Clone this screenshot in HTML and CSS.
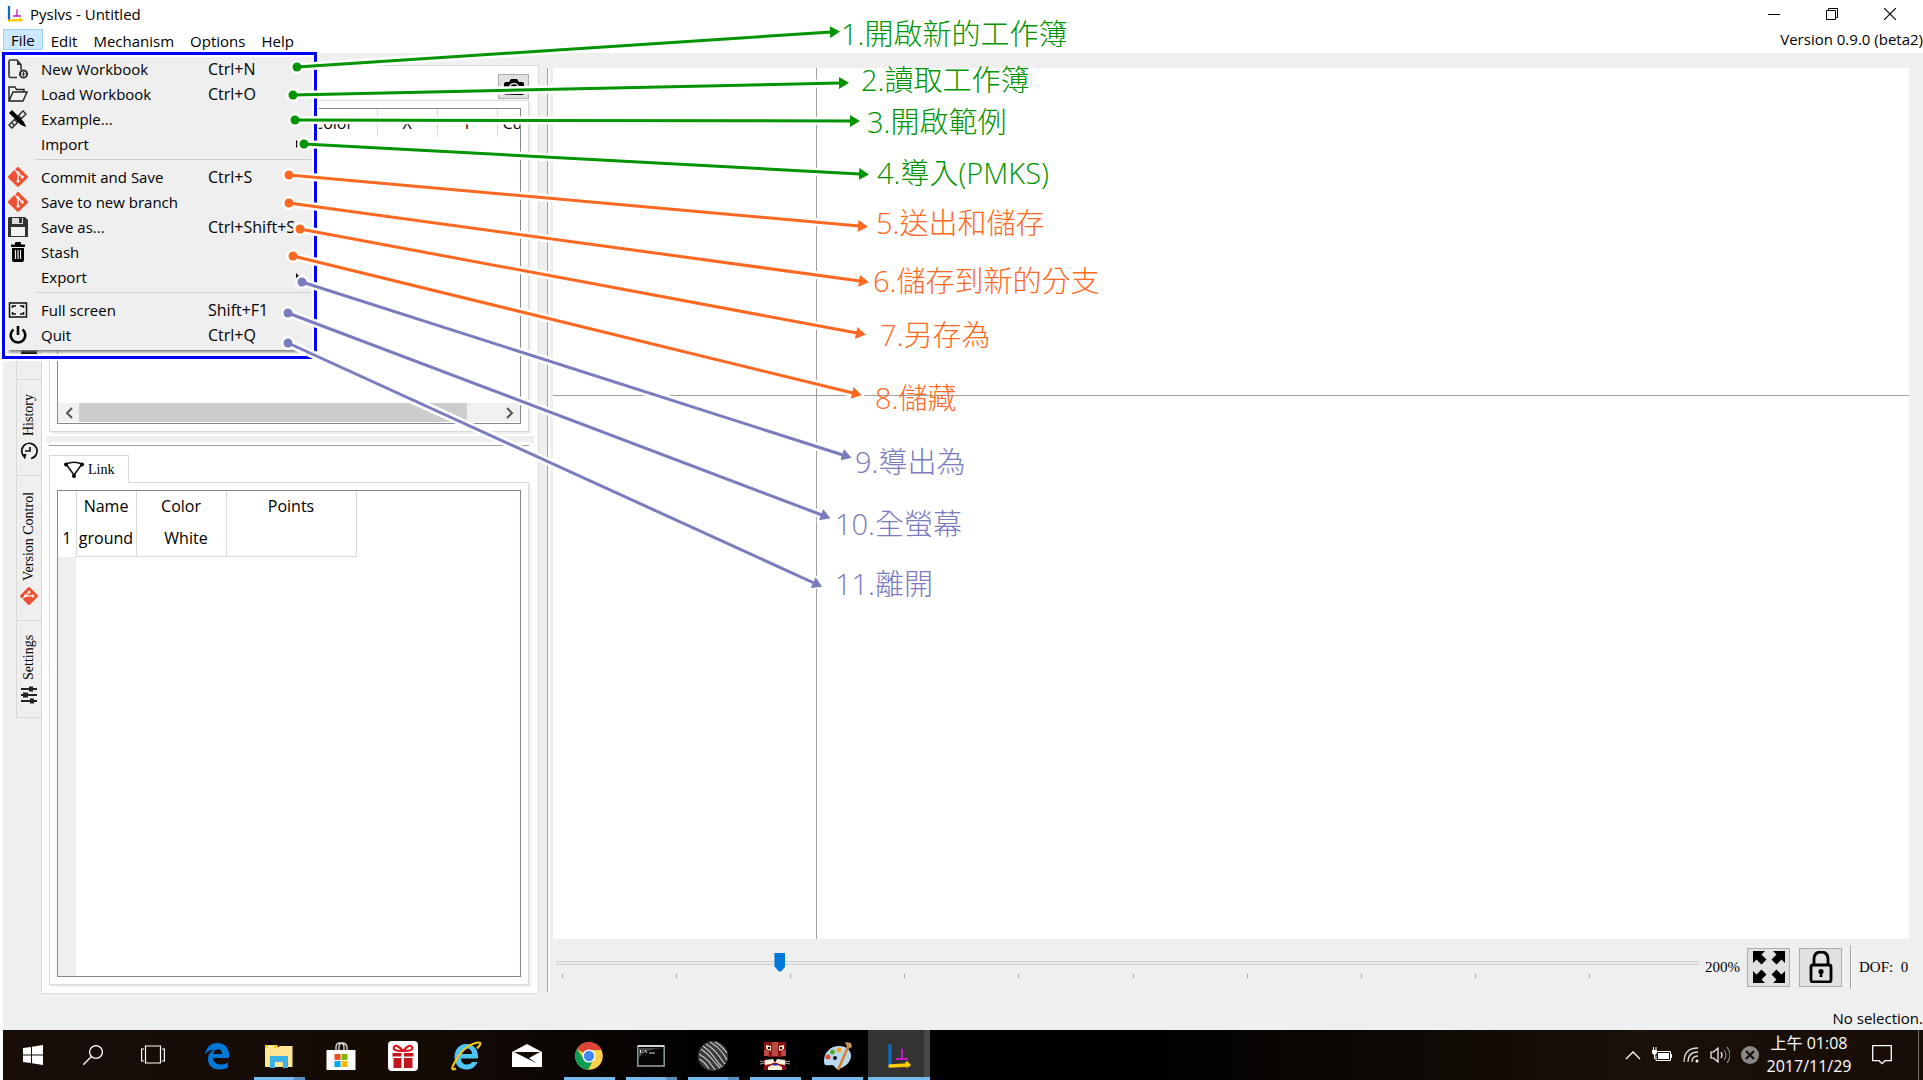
FILE: index.html
```html
<!DOCTYPE html>
<html lang="zh-Hant">
<head>
<meta charset="utf-8">
<title>Pyslvs - Untitled</title>
<link rel="stylesheet" href="styles.css">
</head>
<body>
<svg class="defs" width="0" height="0" aria-hidden="true">
  <symbol id="i-git" viewBox="0 0 24 24"><path fill="#fff" d="M12 3l9 9-9 9-9-9z"/><path fill="#f05033" d="M23.546 10.93L13.067.452c-.604-.603-1.582-.603-2.188 0L8.708 2.627l2.76 2.76c.645-.215 1.379-.07 1.889.441.516.515.658 1.258.438 1.9l2.658 2.66c.645-.223 1.387-.078 1.9.435.721.72.721 1.884 0 2.604-.719.719-1.881.719-2.6 0-.539-.541-.674-1.337-.404-1.996L12.86 8.955v6.525c.176.086.342.203.488.348.713.721.713 1.883 0 2.6-.719.721-1.889.721-2.609 0-.719-.719-.719-1.879 0-2.598.182-.18.387-.316.605-.406V8.835c-.217-.091-.424-.222-.6-.401-.545-.545-.676-1.342-.396-2.009L7.636 3.7.45 10.881c-.6.605-.6 1.584 0 2.189l10.48 10.477c.604.604 1.582.604 2.186 0l10.43-10.43c.605-.603.605-1.582 0-2.187"/></symbol>
  <symbol id="i-app" viewBox="0 0 24 24"><path d="M3 1v20" stroke="#0a6cbc" stroke-width="3.4" stroke-linecap="round"/><path d="M3 22l19-1M20 19v3" stroke="#fc0" stroke-width="3.4" stroke-linecap="round"/><path d="M15 5v10M9 15h12" stroke="#c41ac4" stroke-width="2"/></symbol>
</svg>
<div class="app">
  <header class="titlebar">
    <svg class="app-icon"><use href="#i-app"/></svg>
    <h1>Pyslvs - Untitled</h1>
    <div class="window-buttons">
      <button aria-label="Minimize"><svg width="12" height="12"><path d="M0 6.500h12" stroke="#000"/></svg></button>
      <button aria-label="Restore"><svg width="12" height="12" fill="none" stroke="#000"><path d="M.5 2.500h9v9h-9zM2.500 2V.5h9v9H10"/></svg></button>
      <button aria-label="Close"><svg width="12" height="12" stroke="#000" stroke-width="1.200"><path d="M0 0l12 12M12 0L0 12"/></svg></button>
    </div>
  </header>

  <nav class="menubar">
    <div class="menu-root">
      <button class="menu-title open">File</button>
      <div class="menu">
        <button class="item"><svg viewBox="0 0 20 20"><g fill="none" stroke="#333" stroke-width="1.600"><path d="M9 18.500H2.500a1.500 1.500 0 0 1-1.500-1.500V2.500A1.500 1.500 0 0 1 2.500 1H9l4 4.500V11"/><circle cx="15.500" cy="15" r="3.600" stroke-width="2"/></g><path d="M9 1v5h4z" fill="#333"/><path d="M15.500 13v4M13.500 15h4" stroke="#333"/></svg><span>New Workbook</span><kbd>Ctrl+N</kbd></button>
        <button class="item"><svg viewBox="0 0 20 20" fill="none" stroke="#222" stroke-width="1.400"><path d="M1 17V3h6l1.500 2.500H16V8M1 17L5 8h14l-4 9z"/></svg><span>Load Workbook</span><kbd>Ctrl+O</kbd></button>
        <button class="item"><svg viewBox="0 0 20 20"><path d="M1 16L15 2l3 3L4 19zM4 14l2 2M7 11l2 2M11 7l2 2" fill="none" stroke="#222" stroke-width="1.300"/><path d="M1 4l3-3 12 12 2 5-5-2z" fill="#000"/></svg><span>Example...</span><kbd></kbd></button>
        <button class="item"><i></i><span>Import</span><kbd></kbd><svg class="sub" viewBox="0 0 4 8"><path d="M0 0l4 4-4 4z"/></svg></button>
        <hr>
        <button class="item"><svg><use href="#i-git"/></svg><span>Commit and Save</span><kbd>Ctrl+S</kbd></button>
        <button class="item"><svg><use href="#i-git"/></svg><span>Save to new branch</span><kbd></kbd></button>
        <button class="item"><svg viewBox="0 0 20 20"><path d="M1 0h16l3 3v17H0V1z" fill="#333"/><path d="M4 1h11v6H4z" fill="#ddd"/><path d="M11 1h3v5h-3z" fill="#333"/><path d="M3 10h14v9H3z" fill="#f2f2f2"/></svg><span>Save as...</span><kbd>Ctrl+Shift+S</kbd></button>
        <button class="item"><svg viewBox="0 0 20 20"><path d="M3 2.500h4V1q0-1 1-1h4q1 0 1 1v1.500h4V5H3zM4 6h12v12q0 2-2 2H6q-2 0-2-2z"/><path d="M7.500 8v9M10 8v9M12.500 8v9" stroke="#efefef" stroke-width="1.200"/></svg><span>Stash</span><kbd></kbd></button>
        <button class="item"><i></i><span>Export</span><kbd></kbd><svg class="sub" viewBox="0 0 4 8"><path d="M0 0l4 4-4 4z"/></svg></button>
        <hr>
        <button class="item"><svg viewBox="0 0 20 20" fill="none" stroke="#111" stroke-width="1.500"><path d="M1.500 3h17v14h-17zM4.500 8V6H8M12 6h3.500v2M15.500 12v2H12M8 14H4.500v-2"/></svg><span>Full screen</span><kbd>Shift+F1</kbd></button>
        <button class="item"><svg viewBox="0 0 20 20" fill="none" stroke="#000" stroke-width="2.600"><path d="M10 1v9M5.500 4.500a7.300 7.300 0 1 0 9 0"/></svg><span>Quit</span><kbd>Ctrl+Q</kbd></button>
      </div>
    </div>
    <button class="menu-title">Edit</button>
    <button class="menu-title">Mechanism</button>
    <button class="menu-title">Options</button>
    <button class="menu-title">Help</button>
    <p class="version">Version 0.9.0 (beta2)</p>
  </nav>

  <main class="workspace">
    <div class="side-tabs">
      <button class="side-tab first" aria-label="Mechanism"><svg viewBox="0 0 16 16"><path d="M1 1h4v14H1zM7 6h3v9H7zM12 1h3v6h-3zM12 9h3v6h-3z"/></svg></button>
      <button class="side-tab history"><svg viewBox="0 0 18 18" fill="none" stroke="#111" stroke-width="1.700"><path d="M3.500 4A7.700 7.700 0 1 1 1.500 11"/><path d="M9 5v5h4"/><path d="M6 1.500v5L.5 5z" fill="#111" stroke="none"/></svg><span>History</span></button>
      <button class="side-tab vcs"><svg><use href="#i-git"/></svg><span>Version Control</span></button>
      <button class="side-tab settings"><svg viewBox="0 0 18 18" stroke="#222"><path d="M3 1v16M9 1v16M15 1v16" stroke-width="2"/><path d="M3 10v4M9 3v5M15 9v4" stroke-width="5"/></svg><span>Settings</span></button>
    </div>

    <section class="dock">
      <div class="points">
        <div class="tools"><button class="camera" aria-label="Screenshot"><svg viewBox="0 0 20 16"><path d="M2 3h3l2-3h6l2 3h3q2 0 2 2v9q0 2-2 2H2q-2 0-2-2V5q0-2 2-2z"/><circle cx="10" cy="9" r="4.500" fill="none" stroke="#e1e1e1" stroke-width="1.500"/></svg></button></div>
        <div class="box">
          <div class="view">
            <table class="grid point-grid">
              <tr><th></th><th>Color</th><th>X</th><th>Y</th><th class="cut">Cu</th></tr>
            </table>
            <div class="scrollbar"><button aria-label="Left"><svg width="8" height="12"><path d="M7 1L2 6l5 5" fill="none" stroke="#555" stroke-width="2"/></svg></button><span class="thumb"></span><button aria-label="Right"><svg width="8" height="12"><path d="M1 1l5 5-5 5" fill="none" stroke="#555" stroke-width="2"/></svg></button></div>
          </div>
        </div>
      </div>
      <div class="splitter"></div>
      <div class="links">
        <button class="tab"><svg viewBox="0 0 20 17"><path d="M2 3q8-3.500 16 0l-8 11z" fill="none" stroke="#111" stroke-width="1.600"/><circle cx="2" cy="3.500" r="2"/><circle cx="18" cy="3.500" r="2"/><circle cx="10" cy="15" r="2"/></svg>Link</button>
        <div class="box">
          <div class="view">
            <table class="grid link-grid">
              <tr class="head"><th></th><th>Name</th><th>Color</th><th>Points</th></tr>
              <tr><th>1</th><td>ground</td><td class="swatch">White</td><td></td></tr>
            </table>
            <div class="gutter"></div>
          </div>
        </div>
      </div>
    </section>

    <div class="divider"></div>

    <section class="stage">
      <div class="canvas"></div>
      <div class="controls">
        <div class="zoom">
          <input type="range" min="0" max="1000" value="193" aria-label="Zoom">
          <div class="ticks"><i></i><i></i><i></i><i></i><i></i><i></i><i></i><i></i><i></i><i></i></div>
        </div>
        <span class="percent">200%</span>
        <button class="tool" aria-label="Fit"><svg viewBox="0 0 32 32"><path d="M0 0h12L8.500 3.500l5 5-5 5-5-5L0 12zM32 0v12l-3.500-3.500-5 5-5-5 5-5L20 0zM0 32V20l3.500 3.500 5-5 5 5-5 5L12 32zM32 32H20l3.500-3.500-5-5 5-5 5 5L32 20z"/></svg></button>
        <button class="tool" aria-label="Lock"><svg viewBox="0 0 32 32"><g fill="none" stroke="#000" stroke-width="2.800"><rect x="6" y="14" width="20" height="17" rx="2"/><path d="M9 14V8q0-7 7-7t7 7v6"/></g><circle cx="16" cy="20.500" r="2.600"/><path d="M15 21h2l.5 5h-3z"/></svg></button>
        <span class="rule"></span>
        <span class="dof">DOF:&nbsp; 0</span>
      </div>
    </section>
  </main>
  <p class="status">No selection.</p>

  <footer class="taskbar">
    <div class="system">
      <button aria-label="Start"><svg width="20" height="20" fill="#fff"><path d="M0 3l8-1v7.500H0zM9 1.800L20 0v9.500H9zM0 10.500h8V18l-8-1zM9 10.500h11V20L9 18.300z"/></svg></button>
      <button aria-label="Search"><svg width="20" height="20" fill="none" stroke="#fff" stroke-width="1.300"><circle cx="13" cy="7" r="6.400"/><path d="M8.500 11.500L0 20"/></svg></button>
      <button aria-label="Task view"><svg width="24" height="20" fill="none" stroke="#fff" stroke-width="1.200"><path d="M4.500 1h15v17h-15zM3 4H.6v12H3M21 4h2.400v12H21"/></svg></button>
    </div>
    <div class="apps">
      <button aria-label="Edge"><svg viewBox="0 0 28 28"><path fill="#0078d7" d="M2 13C3 5 8 1 14.500 1 22 1 26 6.500 26 13v3H10c0 4 3.500 6.500 8 6.500 3 0 5-.8 7-2v5c-2 1.300-5 2-8.500 2C9 27.500 5 23 5 17c0-4 2-7 5.500-9C6 8 3.500 10 2 13zm8.200-1H19c0-3-1.400-4.800-4-4.800S10.700 9 10.200 12z"/></svg></button>
      <button class="run stack" aria-label="Explorer"><svg viewBox="0 0 28 28"><path fill="#ffc928" d="M0 3h12l2 3H0z"/><path fill="#fff" d="M3 4h6v1.500H3z"/><path fill="#ffe694" d="M0 6h13l1.500-2H27.500v21H0z"/><path fill="#3bb1e6" d="M5 14h18v12h-5v-6h-8v6H5z"/></svg></button>
      <button aria-label="Store"><svg viewBox="0 0 28 28"><path d="M9 8V5q0-4 4-4t4 4v3M12 8V5q0-4 3.500-4T20 5v3" fill="none" stroke="#ddd" stroke-width="1.300"/><path fill="#fff" d="M-.5 8h29v20h-29z"/><path fill="#f25022" d="M7.500 12h6v6h-6z"/><path fill="#7fba00" d="M14.500 12h6v6h-6z"/><path fill="#00a4ef" d="M7.500 19h6v6h-6z"/><path fill="#ffb900" d="M14.500 19h6v6h-6z"/></svg></button>
      <button aria-label="Gift"><svg class="big" viewBox="0 0 30 30"><rect width="30" height="30" rx="4" fill="#fff"/><path d="M14 10Q4 10 6 6t9 4q7-8 9-4t-8 4" fill="none" stroke="#e0141e" stroke-width="2"/><path fill="#c4161c" d="M4.500 12h9v3.500h-9zM16 12h9.500v3.500H16zM5.500 17h8v10h-8zM16 17h8.500v10H16z"/></svg></button>
      <button aria-label="Internet Explorer"><svg viewBox="0 0 28 28"><path fill="#4cc4f5" d="M15 2c8 0 12 5.500 12 13v1.500H10c0 4 3 6 6 6 2 0 4-.8 5-2.500h5.500c-2 5-6 7.500-11 7.500C8 27.500 3.500 22 3.500 15S8 2 15 2zm-5 10h11c0-3.500-2-5.500-5.500-5.500S10.500 9 10 12z"/><path d="M4 20Q-2 30 5 26.500M4 20Q12 5 23 1.500t3 5" fill="none" stroke="#f5c51c" stroke-width="2.200"/></svg></button>
      <button aria-label="Mail"><svg class="big" viewBox="0 0 30 30"><path fill="#fff" d="M0 11L15 3l15 8v15H0z"/><path fill="#120903" d="M2 11h26l-11 6 8 5.500z"/></svg></button>
      <button class="run" aria-label="Chrome"><svg viewBox="0 0 28 28"><circle cx="14" cy="14" r="13.800" fill="#fdd04a"/><path fill="#db4437" d="M14 14L2 7A13.800 13.800 0 0 1 26.500 8H14z"/><path fill="#0f9d58" d="M2 7a13.800 13.800 0 0 0 11 20.700L19 17H9z"/><circle cx="14" cy="14" r="6.600" fill="#fff"/><circle cx="14" cy="14" r="5.200" fill="#4285f4"/></svg></button>
      <button class="run stack" aria-label="Command prompt"><svg viewBox="0 0 28 28"><path d="M.8 4h26.400v20H.8z" fill="#050505" stroke="#9aa4ac" stroke-width="1.400"/><path fill="#444" d="M2 6h24Q8 7 2 16z"/><path fill="#d0d6da" d="M1 3h26v2H1z"/><path d="M3.500 8v3M5.500 8.500v.5M5.500 10v.5M8 8l2 3M12 11h6" stroke="#ddd"/></svg></button>
      <button class="run stack" aria-label="Sphere"><svg class="big" viewBox="0 0 30 30"><circle cx="15" cy="15" r="15" fill="#3b3b3b"/><path d="M5 5q7 5 11 11t8 10M8 3q8 5 13 12t6 8M3 8q7 5 11 10t8 9M1 13q8 5 11 9t5 7M12 1q7 4 11 9t6 9M1 18q6 3 10 10M17 1q7 4 12 11" fill="none" stroke="#c8c8c8" stroke-width="1.200"/></svg></button>
      <button class="run" aria-label="Wish"><svg viewBox="0 0 28 28"><path fill="#8d0f12" d="M3 0h22v28H3z"/><path fill="#b84a42" d="M11 0h6v14h-6zM3 8h5v6H3zM20 8h5v6h-5z"/><path fill="#f0e6b8" d="M5 3l5 1v5L5 7zM23 3l-5 1v5l5-2z"/><path fill="#000" d="M7 5h2v2H7zM19 5h2v2h-2zM3 14l6 1h10l6-1v3l-6 3H9l-6-3z"/><path fill="#f4f0dc" d="M4 18l8-1 2 4 2-4 8 1v5l-6-1q-4-3-8 0l-6 1zM7 25q7-5 14 0v3H7z"/><path fill="#22c" d="M12 22h4v1.500h-4z"/><path d="M-1 19l5 1M-1 22l5-1M29 19l-5 1M29 22l-5-1" stroke="#aaa"/></svg></button>
      <button class="run" aria-label="Paint"><svg class="big" viewBox="0 0 30 30"><path fill="#b9d9ee" d="M2 20C2 11 9 5 17 5s12 5 12 10-5 11-12 13c-4 1-4-4-7-4-4 0-8 2-8-4z"/><circle cx="13" cy="17" r="2" fill="#111"/><circle cx="6" cy="16" r="2.500" fill="#e0483e"/><circle cx="10.500" cy="11" r="2.500" fill="#5aa63c"/><circle cx="17" cy="9" r="2.500" fill="#f2a91e"/><path d="M16 29L26 6" stroke="#d97f2b" stroke-width="2.600"/><path fill="#c9975c" d="M23 1l6 1 1 4-4 2z"/></svg></button>
      <button class="run active" aria-label="Pyslvs"><svg viewBox="0 0 28 28"><use href="#i-app" width="24" height="24" x="2" y="2"/></svg></button>
    </div>
    <div class="tray">
      <svg width="16" height="10" fill="none" stroke="#fff" stroke-width="1.300"><path d="M1 9l7-7 7 7"/></svg>
      <svg width="20" height="16"><path d="M5 4.500h13.500v9H4v-5" fill="none" stroke="#fff"/><path d="M6 6h11v6H6zM19 7h1v4h-1zM0 3h5v3q-1 2-2.500 2T0 6zM1 0h1v3H1zM3.500 0h1v3h-1zM2 8h1v4H2z" fill="#fff"/></svg>
      <svg width="16" height="16" fill="none" stroke="#ddd" stroke-width="1.300"><path d="M1 15Q1 1 15 1M5 15Q5 5 15 5M9 15Q9 9 15 9"/><circle cx="14" cy="14" r="1.500" fill="#fff" stroke="none"/></svg>
      <svg width="20" height="18" fill="none" stroke="#fff" stroke-width="1.200"><path d="M1 6h2.500L8 2v14l-4.500-4H1zM11 6q2 3 0 6"/><path d="M14 4q4 5 0 10M17 1q6 8 0 16" stroke="#888"/></svg>
      <svg width="18" height="18"><circle cx="9" cy="9" r="9" fill="#8b8784"/><path d="M5 5l8 8M13 5l-8 8" stroke="#111" stroke-width="2.200"/></svg>
      <time>上午 01:08<br>2017/11/29</time>
      <svg width="20" height="20" fill="none" stroke="#fff" stroke-width="1.300"><path d="M.7.7h18.600v15H13l-3 3-3-3H.7z"/></svg>
      <span class="peek"></span>
    </div>
  </footer>
</div>

<svg class="callouts">
  <defs>
    <marker id="tip-w" markerUnits="userSpaceOnUse" markerWidth="20" markerHeight="20" refX="3" refY="10" orient="auto"><path d="M0 1v18L15 10z" fill="#fff"/></marker>
    <marker id="dot-w" markerUnits="userSpaceOnUse" markerWidth="16" markerHeight="16" refX="8" refY="8"><circle cx="8" cy="8" r="7" fill="#fff"/></marker>
    <marker id="tip-g" markerUnits="userSpaceOnUse" markerWidth="12" markerHeight="12" refX="1" refY="6" orient="auto"><path d="M0 0v12L10 6z" fill="#009400"/></marker>
    <marker id="dot-g" markerUnits="userSpaceOnUse" markerWidth="10" markerHeight="10" refX="5" refY="5"><circle cx="5" cy="5" r="4.500" fill="#009400"/></marker>
    <marker id="tip-o" markerUnits="userSpaceOnUse" markerWidth="12" markerHeight="12" refX="1" refY="6" orient="auto"><path d="M0 0v12L10 6z" fill="#ff6820"/></marker>
    <marker id="dot-o" markerUnits="userSpaceOnUse" markerWidth="10" markerHeight="10" refX="5" refY="5"><circle cx="5" cy="5" r="4.500" fill="#ff6820"/></marker>
    <marker id="tip-p" markerUnits="userSpaceOnUse" markerWidth="12" markerHeight="12" refX="1" refY="6" orient="auto"><path d="M0 0v12L10 6z" fill="#7b7bc0"/></marker>
    <marker id="dot-p" markerUnits="userSpaceOnUse" markerWidth="10" markerHeight="10" refX="5" refY="5"><circle cx="5" cy="5" r="4.500" fill="#7b7bc0"/></marker>
    <g id="lines-g"><path d="M297 67L831 32"/><path d="M293 95L840 83"/><path d="M295 120L851 121"/><path d="M304 144L860 174"/></g>
    <g id="lines-o"><path d="M289 175L859 226"/><path d="M289 203L860 281"/><path d="M300 229L857 333"/><path d="M293 256L853 393"/></g>
    <g id="lines-p"><path d="M302 282L843 455"/><path d="M288 313L822 515"/><path d="M288 343L814 583"/></g>
  </defs>
  <rect class="frame-halo" x="3.500" y="53.500" width="312" height="304"/>
  <rect class="frame" x="3.500" y="53.500" width="312" height="304"/>
  <g class="halo" marker-start="url(#dot-w)" marker-end="url(#tip-w)"><use href="#lines-g"/></g>
  <g class="green line" marker-start="url(#dot-g)" marker-end="url(#tip-g)"><use href="#lines-g"/></g>
  <g class="halo" marker-start="url(#dot-w)" marker-end="url(#tip-w)"><use href="#lines-o"/></g>
  <g class="orange line" marker-start="url(#dot-o)" marker-end="url(#tip-o)"><use href="#lines-o"/></g>
  <g class="halo" marker-start="url(#dot-w)" marker-end="url(#tip-w)"><use href="#lines-p"/></g>
  <g class="purple line" marker-start="url(#dot-p)" marker-end="url(#tip-p)"><use href="#lines-p"/></g>
  <g class="green note"><text x="841" y="45">1.開啟新的工作簿</text><text x="861" y="91">2.讀取工作簿</text><text x="867" y="133">3.開啟範例</text><text x="877" y="184">4.導入(PMKS)</text></g>
  <g class="orange note"><text x="876" y="234">5.送出和儲存</text><text x="873" y="292">6.儲存到新的分支</text><text x="880" y="346">7.另存為</text><text x="875" y="409">8.儲藏</text></g>
  <g class="purple note"><text x="855" y="473">9.導出為</text><text x="835" y="535">10.全螢幕</text><text x="835" y="595">11.離開</text></g>
</svg>
</body>
</html>
```
FILE: styles.css
```css
* { box-sizing: border-box; }
body { margin: 0; background: #fff; color: #000; font: 15px/20px "Open Sans", "Noto Sans CJK TC", sans-serif; position: relative; }
h1, p { margin: 0; font-size: inherit; font-weight: 400; }
button { font: inherit; color: inherit; background: none; border: 0; padding: 0; margin: 0; }
svg { display: block; flex: none; }
.defs { position: absolute; }
.app { min-height: 100vh; display: flex; flex-direction: column; padding-left: 3px; }

.titlebar { display: flex; align-items: center; height: 28px; padding-left: 4px; gap: 7px; }
.app-icon { width: 16px; height: 16px; }
.window-buttons { display: flex; margin-left: auto; padding-right: 4px; }
.window-buttons button { width: 58px; height: 28px; display: grid; place-items: center; }

.menubar { display: flex; height: 25px; padding-top: 1px; }
.menu-root { position: relative; }
.menu-title { height: 24px; padding: 0 7px; border: 1px solid transparent; line-height: 22px; }
.menu-title.open { background: #cce8ff; border-color: #99d1ff; height: 21px; line-height: 21px; }
.version { margin-left: auto; }
.menu { position: absolute; z-index: 2; left: 4px; top: 26px; width: 305px; padding: 1px 0 3px; background: #efefef; box-shadow: 2px 2px 3px #777; }
.item { display: grid; grid-template-columns: 20px 154px 114px 4px; align-items: center; width: 100%; height: 25px; padding-left: 1px; text-align: left; white-space: nowrap; }
.item > svg:first-child { width: 20px; height: 20px; }
.item span { padding-left: 13px; }
.item kbd { font: inherit; font-size: 16px; padding-left: 26px; }
.item .sub { width: 4px; height: 8px; }
.menu hr { margin: 3px 1px 4px 29px; border: 0; border-top: 1px solid #d0d0d0; }

.workspace { flex: 1; display: flex; background: #efefef; padding: 12px 14px 12px 13px; }
.side-tabs { width: 25px; font: 14px/16px "Liberation Serif", serif; }
.side-tab { display: flex; align-items: center; justify-content: center; gap: 6px; width: 25px; writing-mode: vertical-rl; transform: rotate(180deg); border: 1px solid #d9d9d9; border-bottom: 0; border-left: 0; }
.side-tab svg { width: 18px; height: 18px; transform: rotate(90deg); }
.side-tab.first { height: 315px; justify-content: flex-start; padding-top: 24px; }
.history { height: 96px; }
.vcs { height: 145px; }
.settings { height: 97px; }
.dock { width: 498px; border: 1px solid #d9d9d9; background: #fff; display: grid; grid-template-columns: minmax(0, 1fr); grid-template-rows: 370fr 6px 551fr; padding: 0 4px; }
.points { display: flex; flex-direction: column; padding: 0 5px 4px 3px; }
.tools { display: flex; justify-content: flex-end; padding: 8px 0 1px; }
.camera { width: 31px; height: 25px; border: 1px solid #adadad; background: #e1e1e1; display: grid; place-items: center; }
.camera svg { width: 20px; height: 16px; }
.box { flex: 1; border: 1px solid #d9d9d9; box-shadow: 2px 2px 0 #f0f0f0; padding: 7px; display: flex; }
.view { flex: 1; min-width: 0; border: 1px solid #828790; display: flex; flex-direction: column; overflow: hidden; font-size: 16px; }
.splitter { background: #efefef; }
.links { display: flex; flex-direction: column; padding: 3px 5px 8px 3px; }
.links::before { content: ""; border-top: 1px solid #a0a0a0; margin-bottom: 9px; }
.tab { position: relative; z-index: 1; width: 80px; height: 28px; margin-bottom: -1px; display: flex; align-items: center; gap: 4px; padding-left: 14px; background: #fff; border: 1px solid #d9d9d9; border-bottom: 0; font: 14px/16px "Liberation Serif", serif; }
.tab svg { width: 20px; height: 17px; }
.grid { border-collapse: collapse; table-layout: fixed; }
.grid th, .grid td { font-weight: 400; padding: 0; text-align: center; border-right: 1px solid #d9d9d9; }
.point-grid { width: 499px; }
.point-grid th { height: 28px; width: 60px; }
.point-grid th:first-child { width: 231px; }
.point-grid th:nth-child(2) { width: 88px; }
.point-grid .cut { text-align: left; padding-left: 5px; }
.link-grid { width: 298px; }
.link-grid th, .link-grid td { height: 36px; }
.link-grid .head th { height: 29px; }
.link-grid th:first-child { width: 18px; }
.link-grid th:nth-child(2) { width: 60px; }
.link-grid th:nth-child(3) { width: 90px; }
.link-grid th:nth-child(4) { width: 130px; }
.link-grid td { border-bottom: 1px solid #d9d9d9; }
.link-grid .swatch { padding-left: 10px; }
.gutter { flex: 1; width: 18px; background: #efefef; }
.scrollbar { margin: auto 0 1px; height: 19px; display: flex; background: #f0f0f0; }
.scrollbar button { width: 21px; display: grid; place-items: center; }
.scrollbar button:last-child { margin-left: auto; }
.thumb { width: 84%; background: #cdcdcd; }

.divider { width: 3px; margin: 3px 3px 2px 8px; background: #fff; border-left: 1px solid #a0a0a0; }
.stage { flex: 1; display: flex; flex-direction: column; padding-top: 3px; }
.canvas { flex: 1; background: linear-gradient(#a0a0a0, #a0a0a0) 263px 0 / 1px 100% no-repeat, linear-gradient(#a0a0a0, #a0a0a0) 0 327px / 100% 1px no-repeat, #fff; }
.controls { display: flex; align-items: center; padding: 6px 0 5px; font: 15px/20px "Liberation Serif", serif; }
.zoom { flex: 1; padding: 0 0 0 3px; }
.zoom input { appearance: none; display: block; width: 100%; height: 19px; margin: 0; background: linear-gradient(#e7eaea, #e7eaea) 1px 9px / calc(100% - 2px) 2px no-repeat, linear-gradient(#d0d4d4, #d0d4d4) 0 8px / 100% 4px no-repeat; }
.zoom input::-webkit-slider-thumb { appearance: none; width: 11px; height: 19px; background: #0078d7; clip-path: polygon(0 0, 100% 0, 100% 72%, 60% 100%, 40% 100%, 0 72%); }
.ticks { display: flex; justify-content: space-between; padding: 2px 109px 4px 6px; }
.ticks i { width: 1px; height: 4px; background: #a8a496; }
.percent { padding: 0 8px 0 6px; width: 48px; }
.tool { width: 43px; height: 39px; margin-right: 9px; border: 1px solid #adadad; background: #e1e1e1; display: grid; place-items: center; }
.tool svg { width: 32px; height: 32px; }
.rule { width: 2px; height: 44px; margin: 0 7px 0 -1px; border-left: 1px solid #a0a0a0; background: #fff; }
.dof { width: 50px; white-space: nowrap; }
.status { height: 24px; line-height: 24px; background: #efefef; text-align: right; }

.taskbar { display: flex; height: 50px; color: #fff; background: linear-gradient(90deg, #180e07, #150b05 22%, #020101 36%, #020101 60%, #1a1008 85%, #180e07); }
.system, .apps, .tray { display: flex; align-items: center; }
.system button { width: 60px; height: 50px; display: grid; place-items: center; }
.apps { padding-left: 3px; }
.apps button { width: 62px; height: 50px; display: grid; place-items: center; padding-top: 1px; position: relative; }
.apps svg { width: 28px; height: 28px; overflow: visible; }
.apps svg.big { width: 30px; height: 30px; }
.run::after { content: ""; position: absolute; left: 6px; bottom: 0; width: 51px; height: 3px; background: #76b9ed; }
.run.stack::after { background: linear-gradient(90deg, #76b9ed 40px, #5a8fbf 40px); }
.run.active { background: linear-gradient(90deg, #333 56px, #484848 56px); }
.run.active::after { left: 0; width: 100%; }
.tray { margin-left: auto; gap: 11px; }
time { text-align: center; font-size: 16px; line-height: 23px; width: 86px; margin: 0 9px 0 -4px; white-space: nowrap; }
.peek { width: 5px; height: 50px; margin-left: 15px; border-left: 1px solid #77706a; }

.callouts { position: absolute; z-index: 3; inset: 0; width: 100%; height: 100%; pointer-events: none; fill: none; }
.frame { stroke: #00f; stroke-width: 3; }
.frame-halo { stroke: #fff; stroke-width: 7; }
.halo { stroke: #fff; stroke-width: 8; }
.line { stroke-width: 3; }
.green.line { stroke: #009400; }
.orange.line { stroke: #ff6820; }
.purple.line { stroke: #7b7bc0; }
.note { font: 300 29px "Open Sans", "Noto Sans CJK TC", sans-serif; }
.green.note { fill: #009400; }
.orange.note { fill: #ff6820; }
.purple.note { fill: #7b7bc0; }
```
